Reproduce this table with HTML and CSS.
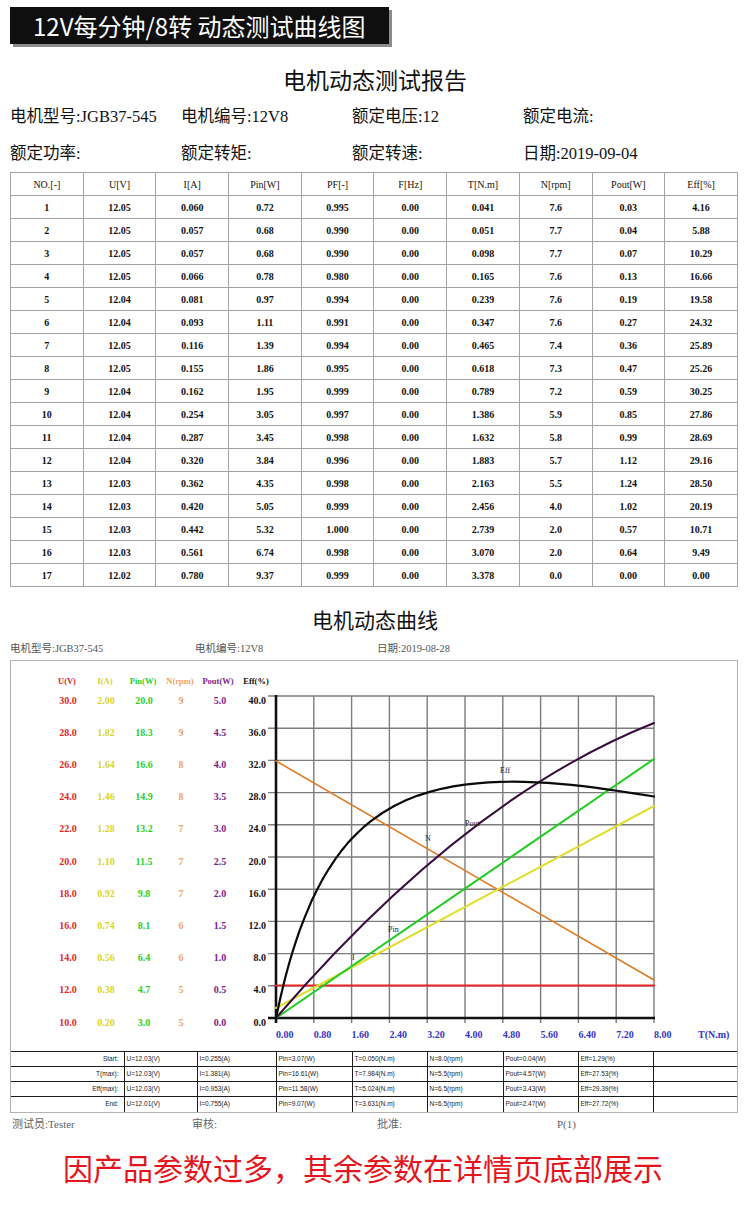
FILE: index.html
```html
<!DOCTYPE html>
<html lang="zh-CN">
<head>
<meta charset="utf-8">
<title>12V每分钟/8转 动态测试曲线图</title>
<link rel="stylesheet" href="styles.css">
</head>
<body>
<div class="hdr">12V每分钟/8转 动态测试曲线图</div>

<h1 class="title">电机动态测试报告</h1>

<div class="info">
  <span>电机型号:JGB37-545</span><span>电机编号:12V8</span><span>额定电压:12</span><span>额定电流:</span>
  <span>额定功率:</span><span>额定转矩:</span><span>额定转速:</span><span>日期:2019-09-04</span>
</div>

<table class="data">
  <thead>
    <tr><th>NO.[-]</th><th>U[V]</th><th>I[A]</th><th>Pin[W]</th><th>PF[-]</th><th>F[Hz]</th><th>T[N.m]</th><th>N[rpm]</th><th>Pout[W]</th><th>Eff[%]</th></tr>
  </thead>
  <tbody>
    <tr><td>1</td><td>12.05</td><td>0.060</td><td>0.72</td><td>0.995</td><td>0.00</td><td>0.041</td><td>7.6</td><td>0.03</td><td>4.16</td></tr>
    <tr><td>2</td><td>12.05</td><td>0.057</td><td>0.68</td><td>0.990</td><td>0.00</td><td>0.051</td><td>7.7</td><td>0.04</td><td>5.88</td></tr>
    <tr><td>3</td><td>12.05</td><td>0.057</td><td>0.68</td><td>0.990</td><td>0.00</td><td>0.098</td><td>7.7</td><td>0.07</td><td>10.29</td></tr>
    <tr><td>4</td><td>12.05</td><td>0.066</td><td>0.78</td><td>0.980</td><td>0.00</td><td>0.165</td><td>7.6</td><td>0.13</td><td>16.66</td></tr>
    <tr><td>5</td><td>12.04</td><td>0.081</td><td>0.97</td><td>0.994</td><td>0.00</td><td>0.239</td><td>7.6</td><td>0.19</td><td>19.58</td></tr>
    <tr><td>6</td><td>12.04</td><td>0.093</td><td>1.11</td><td>0.991</td><td>0.00</td><td>0.347</td><td>7.6</td><td>0.27</td><td>24.32</td></tr>
    <tr><td>7</td><td>12.05</td><td>0.116</td><td>1.39</td><td>0.994</td><td>0.00</td><td>0.465</td><td>7.4</td><td>0.36</td><td>25.89</td></tr>
    <tr><td>8</td><td>12.05</td><td>0.155</td><td>1.86</td><td>0.995</td><td>0.00</td><td>0.618</td><td>7.3</td><td>0.47</td><td>25.26</td></tr>
    <tr><td>9</td><td>12.04</td><td>0.162</td><td>1.95</td><td>0.999</td><td>0.00</td><td>0.789</td><td>7.2</td><td>0.59</td><td>30.25</td></tr>
    <tr><td>10</td><td>12.04</td><td>0.254</td><td>3.05</td><td>0.997</td><td>0.00</td><td>1.386</td><td>5.9</td><td>0.85</td><td>27.86</td></tr>
    <tr><td>11</td><td>12.04</td><td>0.287</td><td>3.45</td><td>0.998</td><td>0.00</td><td>1.632</td><td>5.8</td><td>0.99</td><td>28.69</td></tr>
    <tr><td>12</td><td>12.04</td><td>0.320</td><td>3.84</td><td>0.996</td><td>0.00</td><td>1.883</td><td>5.7</td><td>1.12</td><td>29.16</td></tr>
    <tr><td>13</td><td>12.03</td><td>0.362</td><td>4.35</td><td>0.998</td><td>0.00</td><td>2.163</td><td>5.5</td><td>1.24</td><td>28.50</td></tr>
    <tr><td>14</td><td>12.03</td><td>0.420</td><td>5.05</td><td>0.999</td><td>0.00</td><td>2.456</td><td>4.0</td><td>1.02</td><td>20.19</td></tr>
    <tr><td>15</td><td>12.03</td><td>0.442</td><td>5.32</td><td>1.000</td><td>0.00</td><td>2.739</td><td>2.0</td><td>0.57</td><td>10.71</td></tr>
    <tr><td>16</td><td>12.03</td><td>0.561</td><td>6.74</td><td>0.998</td><td>0.00</td><td>3.070</td><td>2.0</td><td>0.64</td><td>9.49</td></tr>
    <tr><td>17</td><td>12.02</td><td>0.780</td><td>9.37</td><td>0.999</td><td>0.00</td><td>3.378</td><td>0.0</td><td>0.00</td><td>0.00</td></tr>
  </tbody>
</table>

<h2 class="sub-title">电机动态曲线</h2>

<div class="chart-info">
  <span>电机型号:JGB37-545</span><span>电机编号:12V8</span><span>日期:2019-08-28</span>
</div>

<div class="frame">
  <svg class="plot" viewBox="11 661 726 390" width="726" height="390" xmlns="http://www.w3.org/2000/svg">
    <g class="grid">
      <line x1="268" x2="654" y1="696" y2="696"/>
      <line x1="268" x2="654" y1="728.2" y2="728.2"/>
      <line x1="268" x2="654" y1="760.4" y2="760.4"/>
      <line x1="268" x2="654" y1="792.6" y2="792.6"/>
      <line x1="268" x2="654" y1="824.8" y2="824.8"/>
      <line x1="268" x2="654" y1="857" y2="857"/>
      <line x1="268" x2="654" y1="889.2" y2="889.2"/>
      <line x1="268" x2="654" y1="921.4" y2="921.4"/>
      <line x1="268" x2="654" y1="953.6" y2="953.6"/>
      <line x1="268" x2="654" y1="985.8" y2="985.8"/>
      <line x1="313.8" x2="313.8" y1="696" y2="1023"/>
      <line x1="351.6" x2="351.6" y1="696" y2="1023"/>
      <line x1="389.4" x2="389.4" y1="696" y2="1023"/>
      <line x1="427.2" x2="427.2" y1="696" y2="1023"/>
      <line x1="465" x2="465" y1="696" y2="1023"/>
      <line x1="502.8" x2="502.8" y1="696" y2="1023"/>
      <line x1="540.6" x2="540.6" y1="696" y2="1023"/>
      <line x1="578.4" x2="578.4" y1="696" y2="1023"/>
      <line x1="616.2" x2="616.2" y1="696" y2="1023"/>
      <line x1="654" x2="654" y1="696" y2="1023"/>
    </g>
    <g class="axis">
      <line x1="276" x2="276" y1="695" y2="1023"/>
      <line x1="268" x2="655" y1="1018" y2="1018"/>
    </g>

    <line class="c-u" x1="276" y1="985.5" x2="654" y2="985.5"/>
    <line class="c-n" x1="276" y1="761" x2="654" y2="980"/>
    <line class="c-i" x1="276" y1="1008" x2="654" y2="806"/>
    <line class="c-pin" x1="276" y1="1018" x2="654" y2="759"/>
    <path class="c-pout" d="M276,1018 Q465,798 654,723"/>
    <polyline class="c-eff" points="276,1018 277.2,1012.6 278.4,1006.9 280.7,996.4 283.1,986.5 285.4,977.1 287.8,968.3 290.1,960.0 292.5,952.1 296,941.2 299.6,930.7 304.4,918.1 311.4,901.3 317.3,889.2 323.3,878.0 329.2,868.3 335.1,859.3 341,851.3 346.9,844.1 352.8,837.6 358.7,831.8 364.6,826.3 370.5,821.4 382.3,813.0 394.1,806.0 405.9,800.3 417.8,795.6 429.6,791.9 441.4,788.8 453.2,786.4 465,784.6 476.8,783.3 488.6,782.4 500.4,781.9 512.3,781.7 524.1,781.9 535.9,782.3 547.7,782.9 559.5,783.8 571.3,784.9 583.1,786.2 594.9,787.7 606.8,789.3 618.6,791.0 630.4,792.9 642.2,794.7 654,796.5"/>

    <g class="clab">
      <text x="500" y="773">Eff</text>
      <text x="465" y="826">Pout</text>
      <text x="425" y="841">N</text>
      <text x="388" y="932">Pin</text>
      <text x="352" y="960">I</text>
    </g>

    <g class="yhead">
      <text class="u" x="67" y="683.5">U(V)</text>
      <text class="i" x="105" y="683.5">I(A)</text>
      <text class="pin" x="143" y="683.5">Pin(W)</text>
      <text class="n" x="180" y="683.5">N(rpm)</text>
      <text class="pout" x="218" y="683.5">Pout(W)</text>
      <text class="eff" x="256" y="683.5">Eff(%)</text>
    </g>

    <g class="ylab u">
      <text x="68" y="703.5">30.0</text><text x="68" y="735.7">28.0</text><text x="68" y="767.9">26.0</text><text x="68" y="800.1">24.0</text><text x="68" y="832.3">22.0</text><text x="68" y="864.5">20.0</text><text x="68" y="896.7">18.0</text><text x="68" y="928.9">16.0</text><text x="68" y="961.1">14.0</text><text x="68" y="993.3">12.0</text><text x="68" y="1025.5">10.0</text>
    </g>
    <g class="ylab i">
      <text x="106" y="703.5">2.00</text><text x="106" y="735.7">1.82</text><text x="106" y="767.9">1.64</text><text x="106" y="800.1">1.46</text><text x="106" y="832.3">1.28</text><text x="106" y="864.5">1.10</text><text x="106" y="896.7">0.92</text><text x="106" y="928.9">0.74</text><text x="106" y="961.1">0.56</text><text x="106" y="993.3">0.38</text><text x="106" y="1025.5">0.20</text>
    </g>
    <g class="ylab pin">
      <text x="144" y="703.5">20.0</text><text x="144" y="735.7">18.3</text><text x="144" y="767.9">16.6</text><text x="144" y="800.1">14.9</text><text x="144" y="832.3">13.2</text><text x="144" y="864.5">11.5</text><text x="144" y="896.7">9.8</text><text x="144" y="928.9">8.1</text><text x="144" y="961.1">6.4</text><text x="144" y="993.3">4.7</text><text x="144" y="1025.5">3.0</text>
    </g>
    <g class="ylab n">
      <text x="181" y="703.5">9</text><text x="181" y="735.7">9</text><text x="181" y="767.9">8</text><text x="181" y="800.1">8</text><text x="181" y="832.3">7</text><text x="181" y="864.5">7</text><text x="181" y="896.7">7</text><text x="181" y="928.9">6</text><text x="181" y="961.1">6</text><text x="181" y="993.3">5</text><text x="181" y="1025.5">5</text>
    </g>
    <g class="ylab pout">
      <text x="220" y="703.5">5.0</text><text x="220" y="735.7">4.5</text><text x="220" y="767.9">4.0</text><text x="220" y="800.1">3.5</text><text x="220" y="832.3">3.0</text><text x="220" y="864.5">2.5</text><text x="220" y="896.7">2.0</text><text x="220" y="928.9">1.5</text><text x="220" y="961.1">1.0</text><text x="220" y="993.3">0.5</text><text x="220" y="1025.5">0.0</text>
    </g>
    <g class="ylab eff">
      <text x="266" y="703.5">40.0</text><text x="266" y="735.7">36.0</text><text x="266" y="767.9">32.0</text><text x="266" y="800.1">28.0</text><text x="266" y="832.3">24.0</text><text x="266" y="864.5">20.0</text><text x="266" y="896.7">16.0</text><text x="266" y="928.9">12.0</text><text x="266" y="961.1">8.0</text><text x="266" y="993.3">4.0</text><text x="266" y="1025.5">0.0</text>
    </g>

    <g class="xlab">
      <text x="276" y="1037.5">0.00</text><text x="313.8" y="1037.5">0.80</text><text x="351.6" y="1037.5">1.60</text><text x="389.4" y="1037.5">2.40</text><text x="427.2" y="1037.5">3.20</text><text x="465" y="1037.5">4.00</text><text x="502.8" y="1037.5">4.80</text><text x="540.6" y="1037.5">5.60</text><text x="578.4" y="1037.5">6.40</text><text x="616.2" y="1037.5">7.20</text><text x="654" y="1037.5">8.00</text>
      <text x="698" y="1037.5">T(N.m)</text>
    </g>
  </svg>

  <table class="stats">
    <colgroup>
      <col class="k1"><col class="k2"><col class="k3"><col class="k4"><col class="k5"><col class="k6"><col class="k7"><col class="k8"><col class="k9">
    </colgroup>
    <tr><td class="lab">Start:</td><td>U=12.03(V)</td><td>I=0.255(A)</td><td>Pin=3.07(W)</td><td>T=0.050(N.m)</td><td>N=8.0(rpm)</td><td>Pout=0.04(W)</td><td>Eff=1.29(%)</td><td></td></tr>
    <tr><td class="lab">T(max):</td><td>U=12.03(V)</td><td>I=1.381(A)</td><td>Pin=16.61(W)</td><td>T=7.984(N.m)</td><td>N=5.5(rpm)</td><td>Pout=4.57(W)</td><td>Eff=27.53(%)</td><td></td></tr>
    <tr><td class="lab">Eff(max):</td><td>U=12.03(V)</td><td>I=0.953(A)</td><td>Pin=11.58(W)</td><td>T=5.024(N.m)</td><td>N=6.5(rpm)</td><td>Pout=3.43(W)</td><td>Eff=29.39(%)</td><td></td></tr>
    <tr><td class="lab">End:</td><td>U=12.01(V)</td><td>I=0.755(A)</td><td>Pin=9.07(W)</td><td>T=3.631(N.m)</td><td>N=6.5(rpm)</td><td>Pout=2.47(W)</td><td>Eff=27.72(%)</td><td></td></tr>
  </table>
</div>

<div class="foot-info">
  <span>测试员:Tester</span><span>审核:</span><span>批准:</span><span>P(1)</span>
</div>

<p class="notice">因产品参数过多，其余参数在详情页底部展示</p>
</body>
</html>
```

FILE: styles.css
```css
html, body {
  margin: 0;
  padding: 0;
  background: #fff;
}

body {
  width: 750px;
  color: #111;
  font-family: "Liberation Serif", "Noto Sans CJK SC", serif;
}

.hdr {
  margin: 7px 0 0 10px;
  width: 379px;
  height: 37px;
  box-sizing: border-box;
  padding-left: 23px;
  background: #0f0f0f;
  box-shadow: 3px 3px 0 #8c8c8c;
  color: #fff;
  font-family: "Noto Sans CJK SC", sans-serif;
  font-size: 24px;
  line-height: 37px;
  white-space: nowrap;
}

.title {
  margin: 21px 0 0;
  text-align: center;
  font-family: "Noto Sans CJK SC", sans-serif;
  font-weight: normal;
  font-size: 23px;
  line-height: 28px;
}

.info {
  display: grid;
  grid-template-columns: repeat(4, 171px);
  padding: 5px 0 0 10px;
  font-size: 16.5px;
  line-height: 37px;
  white-space: nowrap;
}

.data {
  margin-left: 10px;
  width: 728px;
  border-collapse: collapse;
  table-layout: fixed;
  font-size: 10px;
}

.data tr {
  height: 23px;
}

.data th,
.data td {
  border: 1px solid #a3a3a3;
  padding: 0;
  text-align: center;
  vertical-align: middle;
}

.data th {
  font-weight: normal;
}

.data td {
  font-weight: bold;
}

.sub-title {
  margin: 18px 0 0;
  text-align: center;
  font-family: "Noto Sans CJK SC", sans-serif;
  font-weight: normal;
  font-size: 21px;
  line-height: 28px;
}

.chart-info {
  display: grid;
  grid-template-columns: 185px 182px auto;
  margin-top: 9px;
  padding-left: 10px;
  font-size: 10.5px;
  line-height: 14px;
  color: #555;
}

.frame {
  margin: 4px 0 0 10px;
  width: 728px;
  box-sizing: border-box;
  border: 1px solid #b3b3b3;
}

.plot {
  display: block;
}

.grid line {
  stroke: #7d7d7d;
  stroke-width: 1.4;
}

.axis line {
  stroke: #111;
  stroke-width: 2.6;
}

.c-u,
.c-n,
.c-i,
.c-pin,
.c-pout,
.c-eff {
  fill: none;
  stroke-linejoin: round;
  stroke-linecap: round;
}

.c-u { stroke: #e52424; stroke-width: 2.2; }
.c-n { stroke: #e07a22; stroke-width: 1.6; }
.c-i { stroke: #e2de2e; stroke-width: 2; }
.c-pin { stroke: #22cc22; stroke-width: 2; }
.c-pout { stroke: #3a0a3e; stroke-width: 2; }
.c-eff { stroke: #0a0a0a; stroke-width: 2.2; }

.clab text {
  font-family: "Liberation Serif", serif;
  font-size: 8px;
  fill: #222;
}

.yhead text {
  font-family: "Liberation Serif", serif;
  font-size: 8.5px;
  font-weight: bold;
  text-anchor: middle;
}

.ylab text {
  font-family: "Liberation Serif", serif;
  font-size: 10px;
  font-weight: bold;
  text-anchor: middle;
}

.ylab.eff text {
  text-anchor: end;
}

.u { fill: #e4262a; }
.i { fill: #d9d530; }
.pin { fill: #2ad02a; }
.n { fill: #eea462; }
.pout { fill: #7a1e8a; }
.eff { fill: #111; }

.xlab text {
  font-family: "Liberation Serif", serif;
  font-size: 10px;
  font-weight: bold;
  fill: #3535c8;
}

.stats {
  width: 726px;
  border-collapse: collapse;
  table-layout: fixed;
  font-family: "Liberation Sans", sans-serif;
  font-size: 6.5px;
  color: #222;
}

.stats .k1 { width: 113px; }
.stats .k2 { width: 73px; }
.stats .k3 { width: 79px; }
.stats .k4 { width: 76px; }
.stats .k5 { width: 75px; }
.stats .k6 { width: 76px; }
.stats .k7 { width: 75px; }
.stats .k8 { width: 75px; }
.stats .k9 { width: 84px; }

.stats tr {
  height: 15px;
}

.stats td {
  padding: 0 0 0 2px;
  border-top: 1.5px solid #1c1c1c;
  border-left: 1.5px solid #1c1c1c;
  white-space: nowrap;
  overflow: hidden;
  vertical-align: middle;
  line-height: 10px;
}

.stats td.lab {
  border-left: none;
  text-align: right;
  padding: 0 5px 0 0;
}

.foot-info {
  display: grid;
  grid-template-columns: 180px 185px 180px auto;
  margin-top: 3px;
  padding-left: 12px;
  font-size: 11px;
  line-height: 16px;
  color: #666;
}

.notice {
  margin: 17px 0 0;
  padding-right: 24px;
  text-align: center;
  color: #e3161d;
  font-family: "Noto Sans CJK SC", sans-serif;
  font-size: 30px;
  line-height: 36px;
}
```
